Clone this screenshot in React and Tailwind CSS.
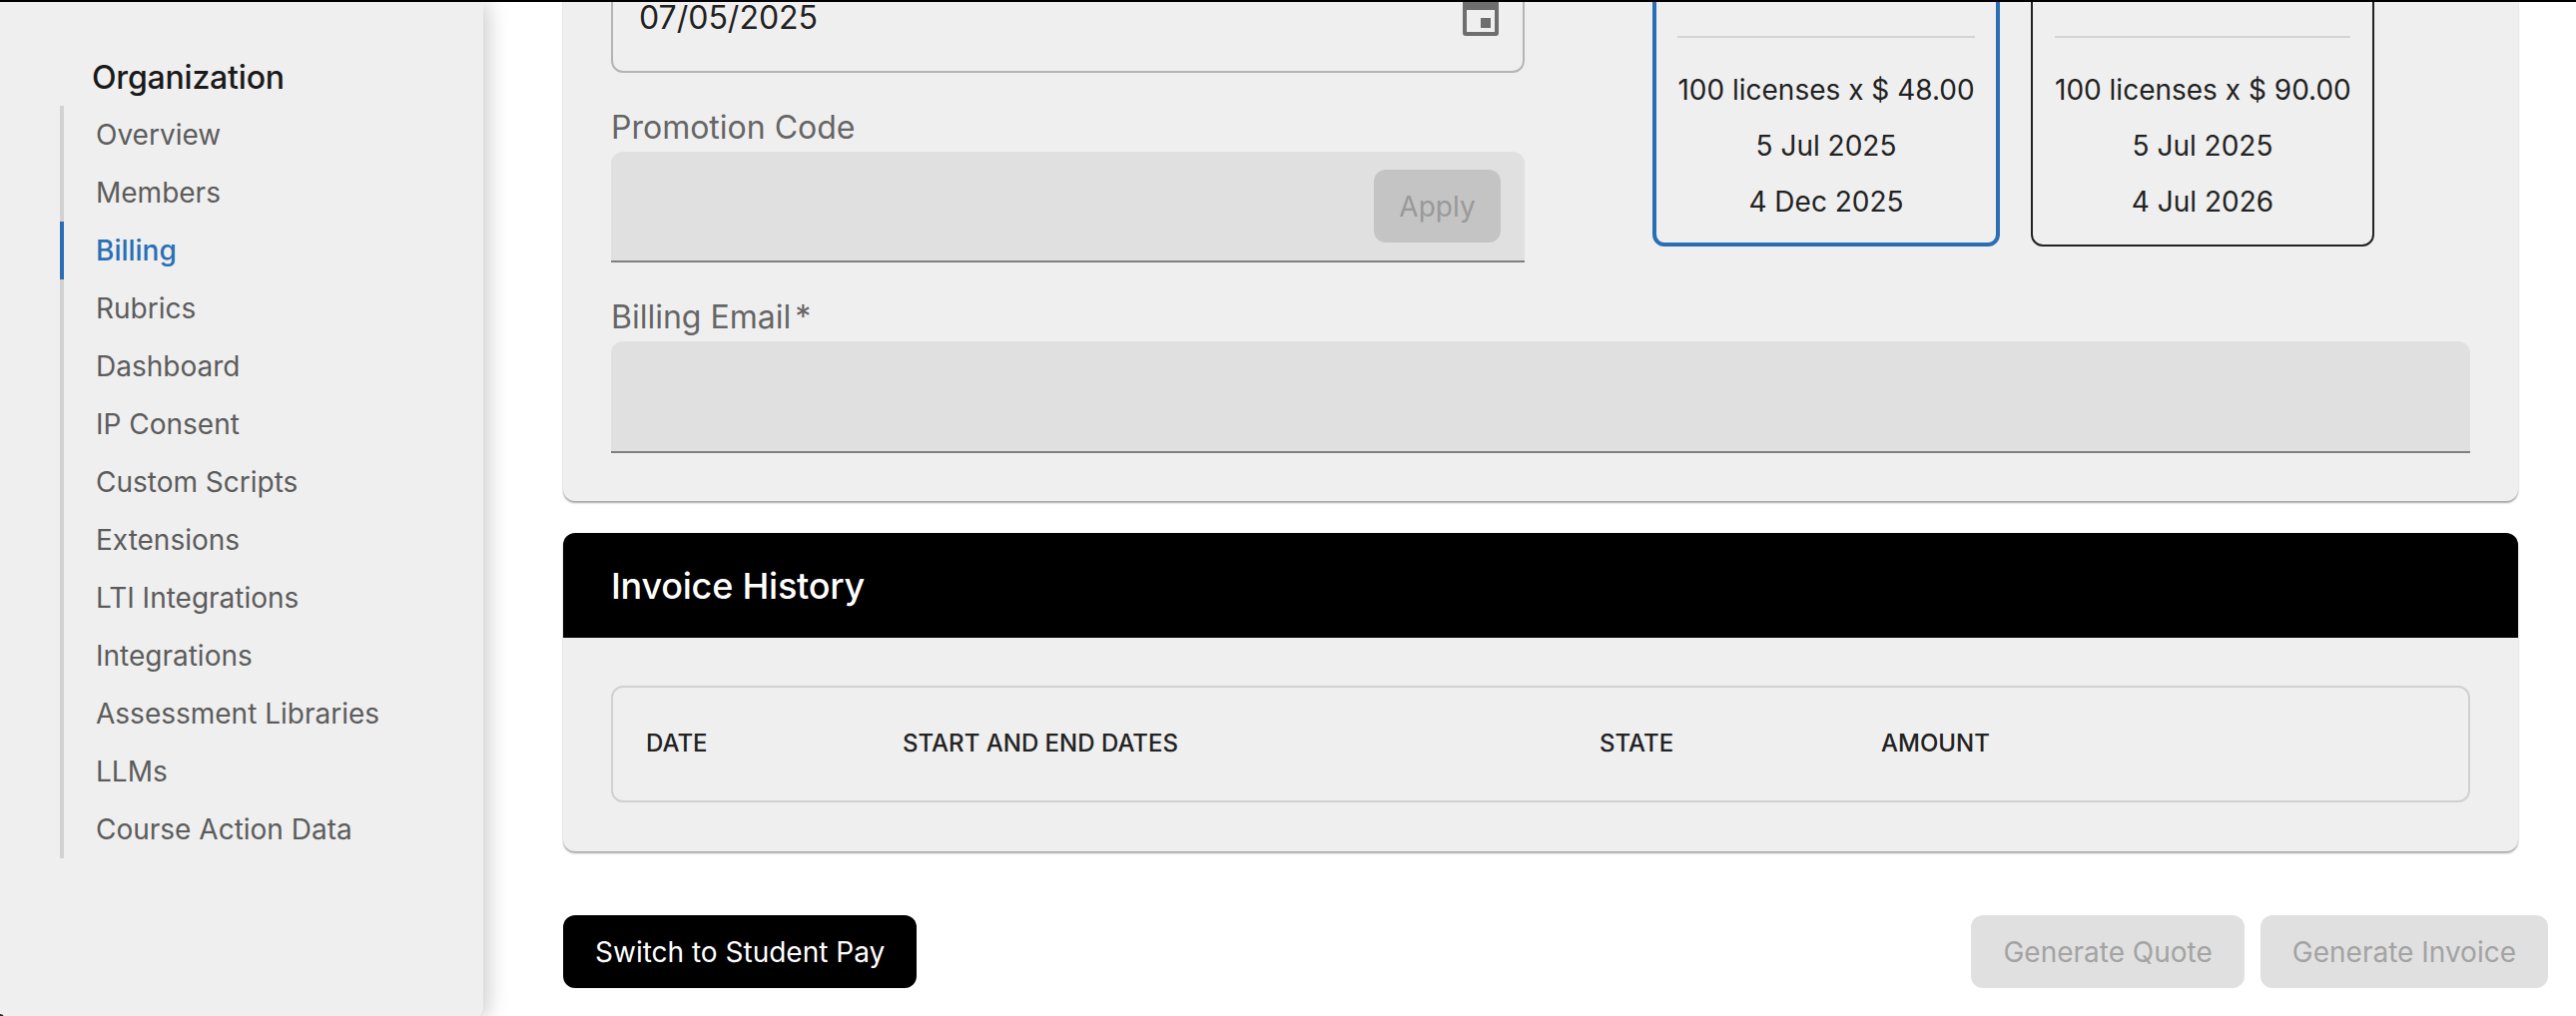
const navItems = [
  'Overview', 'Members', 'Billing', 'Rubrics', 'Dashboard', 'IP Consent', 'Custom Scripts',
  'Extensions', 'LTI Integrations', 'Integrations', 'Assessment Libraries', 'LLMs', 'Course Action Data',
]

function Sidebar() {
  return (
    <aside className="relative h-[1022px] w-[484px] flex-shrink-0 self-start rounded-br-[16px] bg-[#efefef] pt-[52px] shadow-[4px_0_22px_rgba(0,0,0,0.22)]">
      <h2 className="ml-[92px] mb-[4px] text-[32px] leading-[48px] font-medium tracking-[-0.2px] text-[#1a1a1a]">Organization</h2>
      <nav className="ml-[60px] w-[400px]">
        {navItems.map(item => {
          const active = item === 'Billing'
          return (
            <a
              key={item}
              className={`flex h-[58px] items-center border-l-[4px] pl-[32px] text-[28px] ${
                active ? 'border-[#2a6fb5] font-medium text-[#2a6fb5]' : 'border-[#d2d2d2] text-[#5c5c5c]'
              }`}
            >
              {item}
            </a>
          )
        })}
      </nav>
      {/* sliver of the dark window behind the rounded corner */}
      <div className="absolute bottom-[4px] left-0 h-[4px] w-[4px] rounded-tr-full bg-[#1e293b]" />
    </aside>
  )
}

function CalendarIcon() {
  return (
    <svg width="36" height="40" viewBox="0 0 36 40" className="-mt-[3px] flex-shrink-0">
      <path fillRule="evenodd" fill="#6e6e6e" d="M3 0h30a3 3 0 0 1 3 3v34a3 3 0 0 1-3 3H3a3 3 0 0 1-3-3V3a3 3 0 0 1 3-3zM4 14v22h28V14zM18 22h10v10H18z" />
    </svg>
  )
}

function FieldLabel({ children }) {
  return <label className="block text-[32px] leading-[48px] text-[#666666]">{children}</label>
}

function PriceCard({ price, end, selected }) {
  return (
    <div
      className={`flex h-[285px] flex-col justify-end rounded-[12px] text-center text-[28px] leading-[56px] whitespace-nowrap text-[#222222] ${
        selected ? 'w-[348px] border-[4px] border-[#2a6fb5] px-[21px] pb-[13px]' : 'w-[344px] border-[2px] border-[#222222] px-[22px] pb-[15px]'
      }`}
    >
      <div className="mb-[24px] border-t-[2px] border-[#d4d4d4]" />
      <p>100 licenses x $ {price}</p>
      <p>5 Jul 2025</p>
      <p>{end}</p>
    </div>
  )
}

function PaymentCard() {
  return (
    <section className="w-[1958px] rounded-[12px] bg-[#efefef] px-[48px] pt-[22px] pb-[48px] shadow-[0_2px_2px_rgba(0,0,0,0.35)]">
      <div className="flex">
        <div className="w-[915px] flex-shrink-0">
          <div className="flex h-[111px] items-center justify-between rounded-[12px] border-[2px] border-[#b4b4b4] pr-[24px] pl-[26px]">
            <span className="text-[32px] text-[#222222]">07/05/2025</span>
            <CalendarIcon />
          </div>
          <div className="mt-[31px]">
            <FieldLabel>Promotion Code</FieldLabel>
            <div className="flex h-[111px] items-center justify-end rounded-t-[12px] border-b-[2px] border-[#808080] bg-[#e0e0e0] pr-[24px]">
              <button className="h-[73px] w-[127px] rounded-[12px] bg-[#c4c4c4] text-[28px] text-[#999999]">Apply</button>
            </div>
          </div>
        </div>
        <div className="ml-[128px] flex items-start gap-[31px]">
          <PriceCard price="48.00" end="4 Dec 2025" selected />
          <PriceCard price="90.00" end="4 Jul 2026" />
        </div>
      </div>
      <div className="mt-[31px]">
        <FieldLabel>Billing Email<span className="ml-[4px]">*</span></FieldLabel>
        <div className="h-[112px] rounded-t-[12px] border-b-[2px] border-[#808080] bg-[#e0e0e0]" />
      </div>
    </section>
  )
}

function InvoiceHistory() {
  return (
    <section className="mt-[32px] w-[1958px] rounded-[12px] bg-[#efefef] shadow-[0_2px_2px_rgba(0,0,0,0.35)]">
      <header className="flex h-[105px] items-center rounded-t-[12px] bg-black pl-[48px] text-[36px] font-medium tracking-[-0.22px] text-white">
        Invoice History
      </header>
      <div className="px-[48px] pt-[48px] pb-[49px]">
        <div className="grid h-[117px] grid-cols-[257px_698px_282px_1fr] items-center rounded-[12px] border-[2px] border-[#d0d0d0] pb-[2px] pl-[33px] text-[24px] font-medium text-[#222222]">
          <span>DATE</span>
          <span>START AND END DATES</span>
          <span>STATE</span>
          <span>AMOUNT</span>
        </div>
      </div>
    </section>
  )
}

export default function App() {
  return (
    <div className="h-[1018px] w-[2580px] overflow-hidden bg-white font-['Inter',sans-serif]">
      <div className="relative z-10 h-[2px] bg-black" />
      <div className="flex h-[1016px]">
        <Sidebar />
        {/* page is scrolled: the top of the payment card sits above the fold */}
        <main className="flex-1 overflow-hidden pr-[28px] pl-[80px]">
          <div className="-mt-[62px]">
            <PaymentCard />
            <InvoiceHistory />
            <div className="mt-[64px] flex justify-between text-[28px]">
              <button className="h-[73px] rounded-[12px] bg-black px-[32px] text-white">Switch to Student Pay</button>
              <div className="flex gap-[16px]">
                <button className="h-[73px] rounded-[12px] bg-[#e0e0e0] px-[32px] text-[#a3a3a3]">Generate Quote</button>
                <button className="h-[73px] rounded-[12px] bg-[#e0e0e0] px-[32px] text-[#a3a3a3]">Generate Invoice</button>
              </div>
            </div>
          </div>
        </main>
      </div>
    </div>
  )
}
